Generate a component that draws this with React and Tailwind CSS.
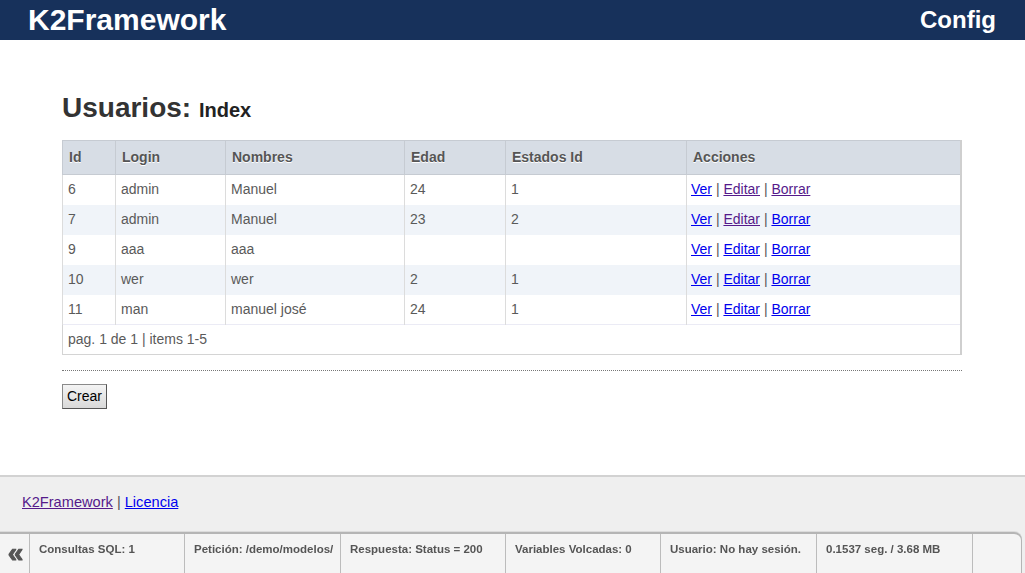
const rows = [
  { id: "6", login: "admin", nombres: "Manuel", edad: "24", estado: "1", links: ["blue", "purple", "purple"] },
  { id: "7", login: "admin", nombres: "Manuel", edad: "23", estado: "2", links: ["blue", "purple", "blue"] },
  { id: "9", login: "aaa", nombres: "aaa", edad: "", estado: "", links: ["blue", "blue", "blue"] },
  { id: "10", login: "wer", nombres: "wer", edad: "2", estado: "1", links: ["blue", "blue", "blue"] },
  { id: "11", login: "man", nombres: "manuel josé", edad: "24", estado: "1", links: ["blue", "blue", "blue"] },
];

const columns = [
  { label: "Id", w: "w-[53px]" },
  { label: "Login", w: "w-[110px]" },
  { label: "Nombres", w: "w-[179px]" },
  { label: "Edad", w: "w-[101px]" },
  { label: "Estados Id", w: "w-[181px]" },
  { label: "Acciones", w: "" },
];

const debugCells = [
  { text: "Consultas SQL: 1", w: "w-[155px]" },
  { text: "Petición: /demo/modelos/", w: "w-[156px]" },
  { text: "Respuesta: Status = 200", w: "w-[165px]" },
  { text: "Variables Volcadas: 0", w: "w-[155px]" },
  { text: "Usuario: No hay sesión.", w: "w-[156px]" },
  { text: "0.1537 seg. / 3.68 MB", w: "w-[156px]" },
];

const linkColor = (c) => (c === "purple" ? "text-[#551a8b]" : "text-[#0000ee]");

const Acciones = ({ links }) => (
  <span className="text-[#555]">
    <a href="#" className={`underline ${linkColor(links[0])}`}>Ver</a> |{" "}
    <a href="#" className={`underline ${linkColor(links[1])}`}>Editar</a> |{" "}
    <a href="#" className={`underline ${linkColor(links[2])}`}>Borrar</a>
  </span>
);

export default function App() {
  return (
    <div className="min-h-[573px] bg-white font-['Liberation_Sans',Arial,sans-serif]">
      <header className="h-[40px] bg-[#17315b] flex items-center justify-between pl-[28px] pr-[29px]">
        <span className="text-white font-bold text-[30px] leading-none">K2Framework</span>
        <span className="text-white font-bold text-[24px] leading-none">Config</span>
      </header>

      <main className="px-[62px] pt-[52px] h-[435px]">
        <h1 className="text-[#333] font-bold text-[28px] leading-[32px]">
          Usuarios: <span className="text-[20px] text-[#222]">Index</span>
        </h1>
        <table className="mt-[14px] w-[900px] border-collapse border border-[#d4d4d4] border-r-2 border-r-[#cfcfcf] text-[14px] text-[#5a5a5a]">
          <thead>
            <tr className="bg-[#d7dde5] h-[34px]">
              {columns.map((c) => (
                <th key={c.label} className={`${c.w} text-left font-bold px-[6px] border border-[#c6cbd2] text-[#555] [text-shadow:0_1px_0_#fff]`}>
                  {c.label}
                </th>
              ))}
            </tr>
          </thead>
          <tbody>
            {rows.map((r, i) => (
              <tr key={r.id} className={`h-[30px] ${i % 2 ? "bg-[#f0f4f9]" : "bg-white"}`}>
                <td className="px-[5px] border-x border-[#dcdcdc]">{r.id}</td>
                <td className="px-[5px] border-x border-[#dcdcdc]">{r.login}</td>
                <td className="px-[5px] border-x border-[#dcdcdc]">{r.nombres}</td>
                <td className="px-[5px] border-x border-[#dcdcdc]">{r.edad}</td>
                <td className="px-[5px] border-x border-[#dcdcdc]">{r.estado}</td>
                <td className="px-[4px] border-x border-[#dcdcdc]">
                  <Acciones links={r.links} />
                </td>
              </tr>
            ))}
            <tr className="h-[30px] bg-white border-t border-[#ebebf5]">
              <td colSpan={6} className="px-[5px]">pag. 1 de 1 | items 1-5</td>
            </tr>
          </tbody>
        </table>
        <div className="mt-[15px] w-[900px] border-t border-dotted border-[#777]" />
        <button className="mt-[13px] h-[25px] px-[4px] text-[14px] text-black border border-[#8a8a8a] border-r-[#555] border-b-[#555] bg-gradient-to-b from-[#f4f4f4] to-[#d9d9d9]">
          Crear
        </button>
      </main>

      <footer className="h-[100px] bg-[#efefef] border-t-2 border-[#d2d2d2] pl-[22px] pt-[15px] text-[14.6px] text-[#555]">
        <a href="#" className="underline text-[#551a8b]">K2Framework</a> |{" "}
        <a href="#" className="underline text-[#0000ee]">Licencia</a>
      </footer>

      <div className="fixed bottom-0 left-0 w-[1022px] h-[41px] bg-[#f4f4f4] border-t-2 border-r border-[#b5b5b5] rounded-tr-[8px] flex text-[#555] [box-shadow:0_-1px_0_#dcdcdc]">
        <div className="w-[30px] shrink-0 border-r border-[#bcbcbc] flex justify-center pt-[5px] pl-[2px] text-[28px] font-black leading-[28px] [-webkit-text-stroke:1px_#555]">«</div>
        {debugCells.map((c) => (
          <div key={c.text} className={`${c.w} shrink-0 border-r border-[#bcbcbc] pl-[9px] pt-[8px] text-[11.5px] font-bold leading-[14px] overflow-hidden whitespace-nowrap`}>
            {c.text}
          </div>
        ))}
      </div>
    </div>
  );
}
